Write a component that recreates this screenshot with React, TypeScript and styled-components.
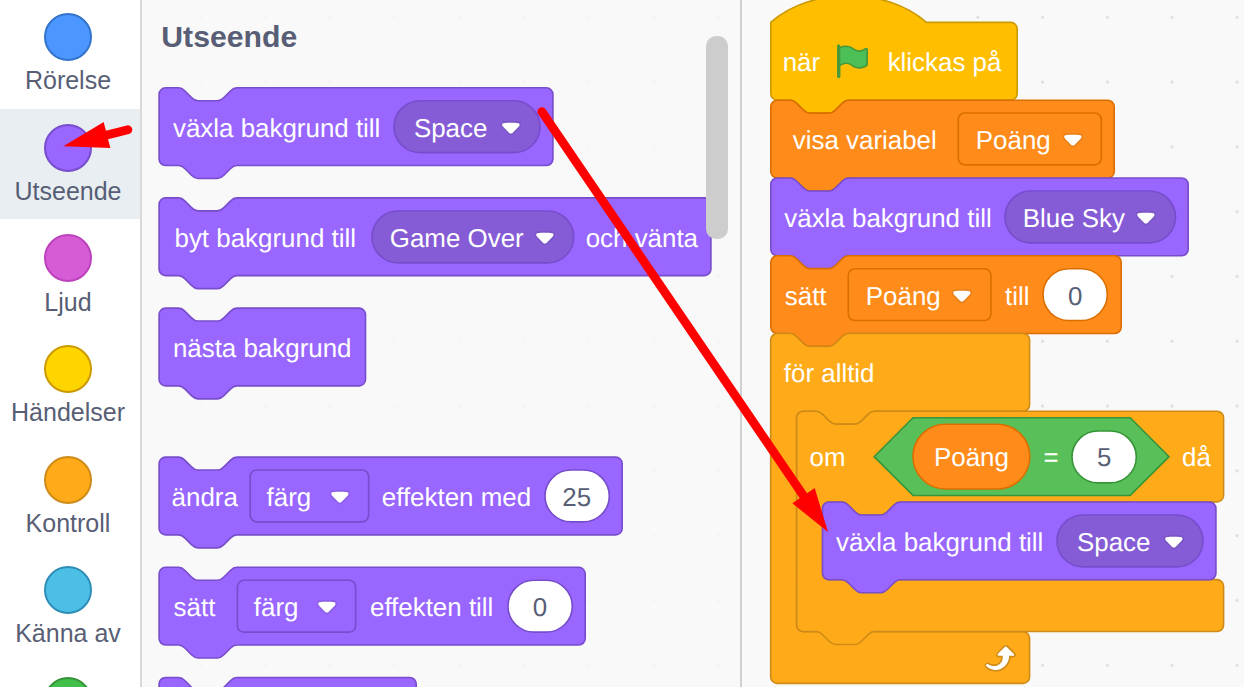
import React from 'react';
import styled, { createGlobalStyle } from 'styled-components';

const U = 1.62;

const GlobalStyle = createGlobalStyle`
  html, body { margin: 0; padding: 0; }
  body { overflow: hidden; font-family: "Liberation Sans", Arial, sans-serif; }
`;

type Palette = { fill: string; stroke: string; menu: string };
const looks: Palette = { fill: '#9966ff', stroke: '#774dcb', menu: '#855cd6' };
const events: Palette = { fill: '#ffbf00', stroke: '#cc9900', menu: '#ffbf00' };
const data: Palette = { fill: '#ff8c1a', stroke: '#db6e00', menu: '#ff8c1a' };
const control: Palette = { fill: '#ffab19', stroke: '#cf8b17', menu: '#ffab19' };
const operators: Palette = { fill: '#59c059', stroke: '#389438', menu: '#59c059' };

const Page = styled.div`
  position: relative;
  display: flex;
  width: 1244px;
  height: 687px;
  overflow: hidden;
  background: #fff;
`;

/* ---------- category column ---------- */

const Categories = styled.nav`
  display: flex;
  flex-direction: column;
  flex: none;
  width: 140px;
  margin-top: -1.75px;
  border-right: 2px solid #d9d9d9;
`;

const Category = styled.div<{ $active?: boolean }>`
  display: flex;
  flex: none;
  flex-direction: column;
  align-items: center;
  box-sizing: border-box;
  height: 110.6px;
  padding: 15px 4px 0 0;
  background: ${(p) => (p.$active ? '#e9eef2' : 'transparent')};
`;

const Bubble = styled.div<{ $fill: string; $stroke: string }>`
  box-sizing: border-box;
  flex: none;
  width: 48px;
  height: 48px;
  border: 2px solid ${(p) => p.$stroke};
  border-radius: 50%;
  background: ${(p) => p.$fill};
`;

const CategoryName = styled.span`
  margin-top: 5.2px;
  font-size: 25px;
  line-height: 29px;
  color: #575e75;
  white-space: nowrap;
`;

const categories = [
  { name: 'Rörelse', fill: '#4c97ff', stroke: '#3373cc' },
  { name: 'Utseende', fill: '#9966ff', stroke: '#774dcb' },
  { name: 'Ljud', fill: '#d65cd6', stroke: '#bd42bd' },
  { name: 'Händelser', fill: '#ffd500', stroke: '#cc9900' },
  { name: 'Kontroll', fill: '#ffab19', stroke: '#cf8b17' },
  { name: 'Känna av', fill: '#4cbfe6', stroke: '#2e8eb8' },
  { name: '', fill: '#40bf4a', stroke: '#389438' },
];

/* ---------- workspace ---------- */

const Workspace = styled.main`
  display: grid;
  flex: none;
  width: 1102px;
  height: 687px;
  background: #f9f9f9;
`;

const DotGrid = styled.svg`
  grid-area: 1 / 1;
  display: block;
`;

const Panels = styled.div`
  grid-area: 1 / 1;
  display: flex;
  z-index: 0;
  min-width: 0;
`;

const Flyout = styled.section`
  display: flex;
  flex: none;
  box-sizing: border-box;
  width: 600px;
  height: 687px;
  padding-left: 17px;
  overflow: hidden;
  background: rgba(249, 249, 249, 0.8);
  border-right: 2px solid #d0d0d0;
`;

const FlyoutList = styled.div`
  display: flex;
  flex: none;
  flex-direction: column;
  align-items: flex-start;
  width: 547.4px;
`;

const FlyoutTitle = styled.h2`
  flex: none;
  box-sizing: border-box;
  height: 88px;
  margin: 0;
  padding: 20px 0 0 2.3px;
  font-size: 30.2px;
  line-height: 34px;
  font-weight: 700;
  color: #575e75;
`;

const Slot = styled.div<{ $after: number }>`
  flex: none;
  margin-bottom: ${(p) => p.$after}px;
`;

const Scrollbar = styled.div`
  z-index: 1;
  flex: none;
  width: 21.6px;
  height: 203px;
  margin-top: 36px;
  border-radius: 10px;
  background: #cdcdcd;
`;

const Script = styled.section`
  display: flex;
  flex-direction: column;
  align-items: flex-start;
  padding: 22px 0 0 29px;
`;

/* ---------- block parts ---------- */

const Stack = styled.div<{ $lead?: number }>`
  display: grid;
  flex: none;
  align-items: center;
  margin-left: ${(p) => p.$lead ?? 0}px;
`;

const Outline = styled.svg`
  grid-area: 1 / 1;
  display: block;
  align-self: start;
  overflow: visible;
`;

const Row = styled.div<{ $h: number }>`
  grid-area: 1 / 1;
  display: flex;
  align-items: center;
  z-index: 0;
  height: ${(p) => p.$h}px;
`;

const Column = styled.div`
  grid-area: 1 / 1;
  display: flex;
  flex-direction: column;
  align-items: flex-start;
  z-index: 0;
`;

const Body = styled.div`
  padding-left: 26px;
`;

const Footer = styled.div`
  display: flex;
  justify-content: flex-end;
  box-sizing: border-box;
  width: 259px;
  height: 52px;
  padding: 6px 13px 0 0;
`;

const Label = styled.span<{ $lead?: number; $w?: number; $dark?: boolean }>`
  flex: none;
  margin-left: ${(p) => p.$lead ?? 0}px;
  width: ${(p) => (p.$w ? `${p.$w}px` : 'auto')};
  padding-top: 3px;
  font-size: 25.92px;
  line-height: 30px;
  text-rendering: geometricPrecision;
  white-space: nowrap;
  text-align: ${(p) => (p.$dark ? 'center' : 'left')};
  color: ${(p) => (p.$dark ? '#575e75' : '#ffffff')};
`;

const Icon = styled.svg<{ $lead?: number; $drop?: number }>`
  display: block;
  flex: none;
  margin-left: ${(p) => p.$lead ?? 0}px;
  margin-top: ${(p) => p.$drop ?? 0}px;
  overflow: visible;
`;

const NOTCH = 'c 2,0 3,1 4,2 l 4,4 c 1,1 2,2 4,2 h 12 c 2,0 3,-1 4,-2 l 4,-4 c 1,-1 2,-2 4,-2';
const TAB = 'c -2,0 -3,1 -4,2 l -4,4 c -1,1 -2,2 -4,2 h -12 c -2,0 -3,-1 -4,-2 l -4,-4 c -1,-1 -2,-2 -4,-2';

const stackPath = (w: number) =>
  `M 0,4 A 4,4 0 0,1 4,0 H 12 ${NOTCH} H ${w - 4} a 4,4 0 0,1 4,4 v 40 a 4,4 0 0,1 -4,4 H 48 ${TAB} H 4 a 4,4 0 0,1 -4,-4 z`;

const hatPath = (w: number) =>
  `M 0,0 c 25,-22 71,-22 96,0 H ${w - 4} a 4,4 0 0,1 4,4 v 40 a 4,4 0 0,1 -4,4 H 48 ${TAB} H 4 a 4,4 0 0,1 -4,-4 z`;

const mouthPath = (w: number, head: number, body: number, foot: number, tab: boolean) =>
  `M 0,4 A 4,4 0 0,1 4,0 H 12 ${NOTCH} H ${w - 4} a 4,4 0 0,1 4,4 v ${head - 8} a 4,4 0 0,1 -4,4 H 64 ${TAB} h -8 a 4,4 0 0,0 -4,4 v ${body - 8} a 4,4 0 0,0 4,4 H ${w - 4} a 4,4 0 0,1 4,4 v ${foot - 8} a 4,4 0 0,1 -4,4 ${tab ? `H 48 ${TAB}` : ''} H 4 a 4,4 0 0,1 -4,-4 z`;

const Shape = ({ w, h, d, c, dx = 0, dy = 0 }: { w: number; h: number; d: string; c: Palette; dx?: number; dy?: number }) => (
  <Outline width={w} height={h}>
    <path d={d} transform={`translate(${dx} ${dy}) scale(${U})`} fill={c.fill} stroke={c.stroke} />
  </Outline>
);

type BlockProps = { w: number; c: Palette; dx?: number; dy?: number; hat?: boolean; children?: React.ReactNode };

const Block = ({ w, c, dx = 0.1, dy = 0, hat, children }: BlockProps) => (
  <Stack>
    <Shape w={w} h={78} d={hat ? hatPath(w / U) : stackPath(w / U)} c={c} dx={dx} dy={dy} />
    <Row $h={78}>{children}</Row>
  </Stack>
);

const Arrow = () => (
  <Icon $drop={2} width={12.71 * U} height={8.79 * U} viewBox="0 0 12.71 8.79">
    <g transform="translate(0.35 0)">
      <path
        opacity="0.1"
        fill="#231f20"
        d="M12.71,2.44A2.41,2.41,0,0,1,12,4.16L8.08,8.08a2.45,2.45,0,0,1-3.45,0L0.72,4.16A2.42,2.42,0,0,1,0,2.44,2.48,2.48,0,0,1,.71.71C1,0.47,1.43,0,6.36,0S11.75,0.46,12,.71A2.44,2.44,0,0,1,12.71,2.44Z"
      />
      <path
        fill="#fff"
        d="M6.36,7.79a1.43,1.43,0,0,1-1-.42L1.42,3.45a1.44,1.44,0,0,1,0-2c0.56-.56,9.31-0.56,9.87,0a1.44,1.44,0,0,1,0,2L7.37,7.37A1.43,1.43,0,0,1,6.36,7.79Z"
      />
    </g>
  </Icon>
);

type MenuProps = { lead?: number; w: number; pad: number; arrow: number; c: Palette; round?: boolean; dx?: number; dy?: number; children: string };

const Menu = ({ lead, w, pad, arrow, c, round, dx = 0, dy = 0, children }: MenuProps) => (
  <Stack $lead={lead}>
    <Outline width={w} height={52}>
      <rect
        x={dx}
        y={dy}
        width={w}
        height={32 * U}
        rx={round ? 16 * U : 4 * U}
        fill={round ? c.menu : c.fill}
        stroke={c.stroke}
        strokeWidth={U}
      />
    </Outline>
    <Row $h={52}>
      <Label $lead={pad} $w={arrow - pad}>{children}</Label>
      <Arrow />
    </Row>
  </Stack>
);

type PillProps = { lead?: number; w?: number; h?: number; c: Palette; filled?: boolean; dx?: number; dy?: number; children: string };

const Pill = ({ lead, w = 64.3, h = 32, c, filled, dx = 0, dy = 0, children }: PillProps) => (
  <Stack $lead={lead}>
    <Outline width={w} height={Math.round(h * U)}>
      <rect
        x={dx}
        y={dy}
        width={w}
        height={h * U}
        rx={(h * U) / 2}
        fill={filled ? c.fill : '#ffffff'}
        stroke={c.stroke}
        strokeWidth={U}
      />
    </Outline>
    <Row $h={Math.round(h * U)}>
      {filled ? <Label $lead={21}>{children}</Label> : <Label $w={w} $dark>{children}</Label>}
    </Row>
  </Stack>
);

const Flag = () => (
  <Icon $lead={13.3} width={24 * U} height={24 * U} viewBox="0 0 24 24">
    <path
      fill="#45993d"
      d="M20.8,3.7c-0.4-0.2-0.9-0.1-1.2,0.2c-2,1.6-4.8,1.6-6.8,0c-2.3-1.9-5.6-2.3-8.3-1v-0.4c0-0.6-0.5-1-1-1s-1,0.4-1,1v18.8c0,0.5,0.5,1,1,1h0.1c0.5,0,1-0.5,1-1v-6.4c1-0.7,2.1-1.2,3.4-1.3c1.2,0,2.4,0.4,3.4,1.2c2.9,2.3,7,2.3,9.8,0c0.3-0.2,0.4-0.5,0.4-0.9V4.7C21.6,4.2,21.3,3.8,20.8,3.7z"
    />
    <path
      fill="#4cbf56"
      d="M20.5,13.9C18,16,14.4,16,11.9,14c-1.1-0.9-2.5-1.4-4-1.4c-1.2,0.1-2.3,0.5-3.4,1.1V4c2.5-1.4,5.5-1.1,7.7,0.6c2.4,1.9,5.7,1.9,8.1,0h0.2l0.1,0.1L20.5,13.9z"
    />
  </Icon>
);

const Loop = () => (
  <Icon width={24 * U} height={24 * U} viewBox="0 0 24 24">
    <path
      fill="#cf8b17"
      d="M23.3,11c-0.3,0.6-0.9,1-1.5,1h-1.6c-0.1,1.3-0.5,2.5-1.1,3.6c-0.9,1.7-2.3,3.2-4.1,4.1c-1.7,0.9-3.6,1.2-5.5,0.9c-1.8-0.3-3.5-1.1-4.9-2.3c-0.7-0.7-0.7-1.9,0-2.6c0.6-0.6,1.6-0.7,2.3-0.2H7c0.9,0.6,1.9,0.9,2.9,0.9s1.9-0.3,2.7-0.9c1.1-0.8,1.8-2.1,1.8-3.5h-1.5c-0.9,0-1.7-0.7-1.7-1.7c0-0.4,0.2-0.9,0.5-1.2l4.4-4.4c0.7-0.6,1.7-0.6,2.4,0L23,9.2C23.5,9.7,23.6,10.4,23.3,11z"
    />
    <path
      fill="#fff"
      d="M21.8,11h-2.6c0,1.5-0.3,2.9-1,4.2c-0.8,1.6-2.1,2.8-3.7,3.6c-1.5,0.8-3.3,1.1-4.9,0.8c-1.6-0.2-3.2-1-4.4-2.1c-0.4-0.3-0.4-0.9-0.1-1.2c0.3-0.4,0.9-0.4,1.2-0.1l0,0c1,0.7,2.2,1.1,3.4,1.1s2.3-0.3,3.3-1c0.9-0.6,1.6-1.5,2-2.6c0.3-0.9,0.4-1.8,0.2-2.8h-2.4c-0.4,0-0.7-0.3-0.7-0.7c0-0.2,0.1-0.3,0.2-0.4l4.4-4.4c0.3-0.3,0.7-0.3,0.9,0L22,9.8c0.3,0.3,0.4,0.6,0.3,0.9S22,11,21.8,11z"
    />
  </Icon>
);

const Pointers = styled.svg`
  position: absolute;
  inset: 0;
  z-index: 2;
  pointer-events: none;
`;

/* ---------- composed scripts ---------- */

const Condition = () => (
  <Stack $lead={9.5}>
    <Shape w={295} h={78} d="M 24,0 H 158 l 24,24 -24,24 H 24 L 0,24 z" c={operators} dx={0.2} dy={-0.2} />
    <Row $h={78}>
      <Pill lead={38.5} w={116.8} h={40} c={data} dy={0.2} filled>Poäng</Pill>
      <Label $lead={13.7} $w={28.7}>=</Label>
      <Pill c={operators}>5</Pill>
    </Row>
  </Stack>
);

const IfBlock = () => (
  <Stack>
    <Shape w={427} h={221} d={mouthPath(263.5, 56, 48, 32, true)} c={control} dx={-0.3} dy={0.2} />
    <Column>
      <Row $h={91}>
        <Label $lead={12.6} $w={55.4}>om</Label>
        <Condition />
        <Label $lead={12.5}>då</Label>
      </Row>
      <Body>
        <Block w={393.4} c={looks} dx={-0.5}>
          <Label $lead={13} $w={221}>växla bakgrund till</Label>
          <Menu w={146} pad={20} arrow={106.4} c={looks} round>Space</Menu>
        </Block>
      </Body>
      <Footer />
    </Column>
  </Stack>
);

const ForeverBlock = () => (
  <Stack>
    <Shape w={259} h={350} d={mouthPath(159.8, 48, 136, 32, false)} c={control} dx={-0.3} dy={-0.5} />
    <Column>
      <Row $h={77}>
        <Label $lead={12.8}>för alltid</Label>
      </Row>
      <Body>
        <IfBlock />
      </Body>
      <Footer>
        <Loop />
      </Footer>
    </Column>
  </Stack>
);

const App = () => (
  <Page>
    <GlobalStyle />
    <Categories>
      {categories.map((c) => (
        <Category key={c.fill} $active={c.name === 'Utseende'}>
          <Bubble $fill={c.fill} $stroke={c.stroke} />
          {c.name && <CategoryName>{c.name}</CategoryName>}
        </Category>
      ))}
    </Categories>
    <Workspace>
      <DotGrid width={1102} height={687}>
        <defs>
          <pattern id="dots" x={25.8} y={-15.2} width={64.8} height={64.8} patternUnits="userSpaceOnUse">
            <circle cx={32.4} cy={32.4} r={1.6} fill="#dddddd" />
          </pattern>
        </defs>
        <rect width={1102} height={687} fill="url(#dots)" />
      </DotGrid>
      <Panels>
        <Flyout>
          <FlyoutList>
            <FlyoutTitle>Utseende</FlyoutTitle>
            <Slot $after={32}>
              <Block w={393.8} c={looks} dy={-0.2}>
                <Label $lead={14} $w={221}>växla bakgrund till</Label>
                <Menu w={146} pad={19.9} arrow={106.4} c={looks} round dy={-0.2}>Space</Menu>
              </Block>
            </Slot>
            <Slot $after={32}>
              <Block w={551.8} c={looks} dy={-0.1}>
                <Label $lead={15.5} $w={197.5}>byt bakgrund till</Label>
                <Menu w={201.7} pad={17.8} arrow={161.9} c={looks} round>Game Over</Menu>
                <Label $lead={12}>och vänta</Label>
              </Block>
            </Slot>
            <Slot $after={71}>
              <Block w={206.4} c={looks} dy={0.1}>
                <Label $lead={13.9}>nästa bakgrund</Label>
              </Block>
            </Slot>
            <Slot $after={32}>
              <Block w={463.1} c={looks} dy={0.1}>
                <Label $lead={12.6} $w={78.4}>ändra</Label>
                <Menu w={118.4} pad={16.6} arrow={79} dx={0.2} c={looks}>färg</Menu>
                <Label $lead={13.4} $w={162.8}>effekten med</Label>
                <Pill c={looks}>25</Pill>
              </Block>
            </Slot>
            <Slot $after={32}>
              <Block w={426.1} c={looks} dy={0.3}>
                <Label $lead={14.6} $w={63.4}>sätt</Label>
                <Menu w={118.2} pad={16.8} arrow={79} dx={0.4} c={looks} dy={0.3}>färg</Menu>
                <Label $lead={14.8} $w={137.8}>effekten till</Label>
                <Pill c={looks} dy={0.3}>0</Pill>
              </Block>
            </Slot>
            <Slot $after={0}>
              <Block w={257.1} c={looks} dy={0.5} />
            </Slot>
          </FlyoutList>
          <Scrollbar />
        </Flyout>
        <Script>
          <Block w={246.4} c={events} dx={-0.2} dy={0.4} hat>
            <Label $lead={11.7} $w={37}>när</Label>
            <Flag />
            <Label $lead={15.8}>klickas på</Label>
          </Block>
          <Block w={343.4} c={data} dx={-0.2} dy={0.2}>
            <Label $lead={21.8} $w={165.2}>visa variabel</Label>
            <Menu w={143} pad={17.8} arrow={104.4} dx={0.3} c={data}>Poäng</Menu>
          </Block>
          <Block w={417.4} c={looks} dx={-0.2}>
            <Label $lead={13.3} $w={220.7}>växla bakgrund till</Label>
            <Menu w={170.5} pad={17.8} arrow={130.2} c={looks} round>Blue Sky</Menu>
          </Block>
          <Block w={350.4} c={data} dx={-0.2} dy={-0.3}>
            <Label $lead={13.8} $w={63.2}>sätt</Label>
            <Menu w={142.6} pad={17.8} arrow={103.2} dx={0.3} c={data} dy={-0.3}>Poäng</Menu>
            <Label $lead={14.4} $w={38.2}>till</Label>
            <Pill c={data} dy={-0.3}>0</Pill>
          </Block>
          <ForeverBlock />
        </Script>
      </Panels>
    </Workspace>
    <Pointers width={1244} height={687} fill="#ff0000" stroke="#ff0000">
      <path d="M541.8,111.6 L806,499.6" strokeWidth={8.8} strokeLinecap="round" />
      <path d="M828,532 L792.3,503.3 L814.7,488 z" stroke="none" />
      <path d="M127.9,129.7 L102,136.3" strokeWidth={8.8} strokeLinecap="round" />
      <path d="M63.3,146.3 L103.7,122 L110.3,148 z" stroke="none" />
    </Pointers>
  </Page>
);

export default App;
